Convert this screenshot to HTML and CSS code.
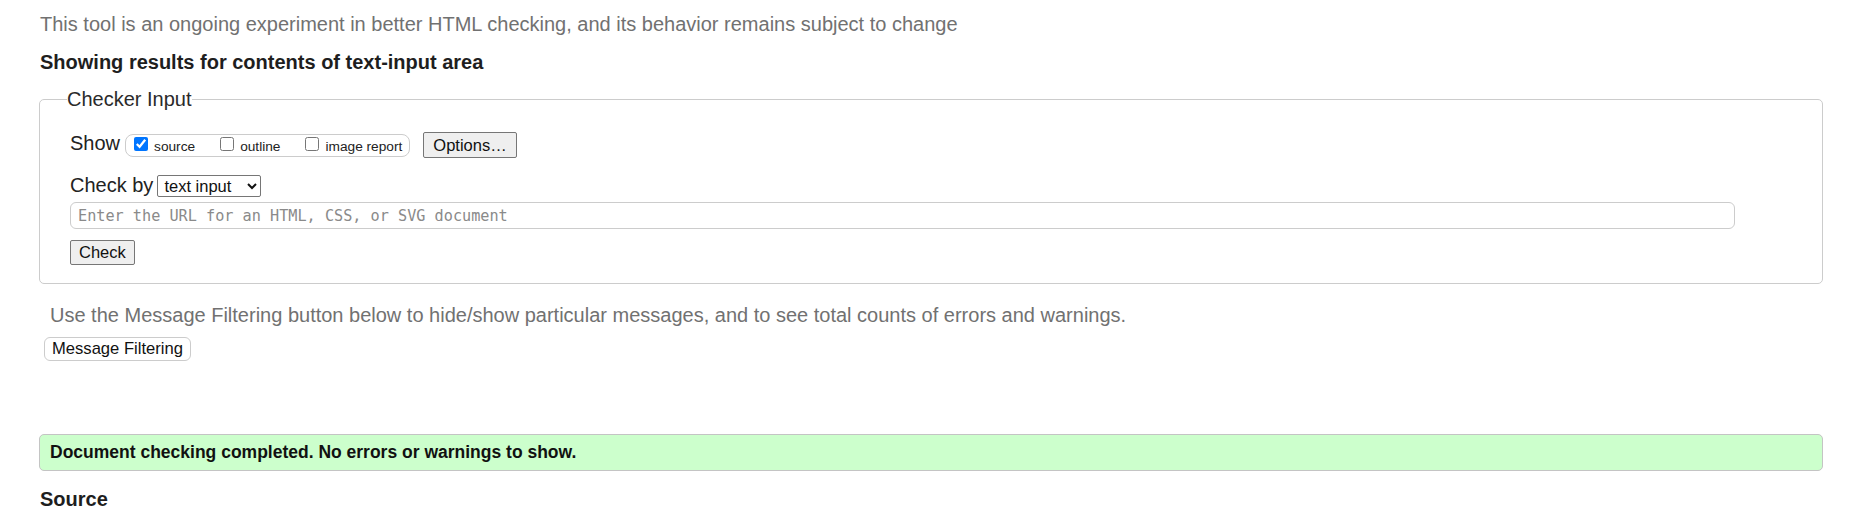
FILE: index.html
```html
<!DOCTYPE html>
<html lang="en">
<head>
<meta charset="utf-8">
<title>Nu Html Checker</title>
<link rel="stylesheet" href="styles.css">
</head>
<body>
<p class="intro">This tool is an ongoing experiment in better HTML checking, and its behavior remains subject to change</p>
<h2 class="results-title">Showing results for contents of text-input area</h2>
<fieldset class="checker">
  <legend class="checker-legend">Checker Input</legend>
  <div class="show-row">
    <span class="row-label show-label">Show</span>
    <div class="show-group">
      <label class="opt"><input type="checkbox" class="cb" checked><span>source</span></label>
      <label class="opt"><input type="checkbox" class="cb"><span>outline</span></label>
      <label class="opt"><input type="checkbox" class="cb"><span>image report</span></label>
    </div>
    <button type="button" class="btn options-btn">Options…</button>
  </div>
  <div class="checkby-row">
    <span class="row-label">Check by</span>
    <select class="doc-select">
      <option>text input</option>
      <option>address</option>
      <option>file upload</option>
    </select>
  </div>
  <input type="text" class="url-input" placeholder="Enter the URL for an HTML, CSS, or SVG document">
  <button type="button" class="btn check-btn">Check</button>
</fieldset>
<p class="filter-note">Use the Message Filtering button below to hide/show particular messages, and to see total counts of errors and warnings.</p>
<button type="button" class="filter-btn">Message Filtering</button>
<div class="success">Document checking completed. No errors or warnings to show.</div>
<h2 class="source-title">Source</h2>
</body>
</html>
```
FILE: styles.css
```css
html, body {
  background: #ffffff;
}
body {
  margin: 0;
  padding: 0 30px 20px 39px;
  font-family: "Liberation Sans", Arial, sans-serif;
  color: #222222;
}
.intro {
  margin: 12px 0 0 1px;
  font-size: 20px;
  line-height: 24px;
  color: #717171;
}
.results-title {
  margin: 15px 0 0 1px;
  font-size: 20px;
  line-height: 22px;
  font-weight: bold;
  color: #1e1e1e;
}
.checker {
  margin: 15px 0 0 0;
  border: 1px solid #cccccc;
  border-radius: 5px;
  padding: 21px 30px 18px 30px;
  min-width: 0;
}
.checker-legend {
  padding: 0;
  margin-left: -3px;
  font-size: 20px;
  line-height: 23px;
  color: #2a2a2a;
}
.show-row {
  display: flex;
  align-items: center;
  height: 26px;
}
.row-label {
  font-size: 20px;
  line-height: 23px;
  color: #222222;
}
.show-label {
  margin-bottom: 4px;
}
.show-group {
  display: flex;
  align-items: center;
  gap: 25px;
  box-sizing: border-box;
  height: 23px;
  margin-left: 5px;
  padding: 0 7px 0 8px;
  border: 1px solid #cccccc;
  border-radius: 8px;
}
.opt {
  display: flex;
  align-items: center;
  gap: 6px;
  font-size: 13.7px;
  color: #222222;
}
.opt span {
  padding-top: 2px;
}
.cb {
  width: 14px;
  height: 14px;
  margin: 0 0 3px 0;
}
.btn {
  font-family: "Liberation Sans", Arial, sans-serif;
  font-size: 16.5px;
  color: #111111;
  background: #efefef;
  border: 1px solid #767676;
  border-radius: 2px;
  padding: 0 9px;
  box-sizing: border-box;
}
.options-btn {
  margin-left: 13px;
  height: 26px;
}
.checkby-row {
  display: flex;
  align-items: baseline;
  margin-top: 16px;
}
.doc-select {
  margin-left: 4px;
  width: 104px;
  height: 22px;
  box-sizing: border-box;
  font-family: "Liberation Sans", Arial, sans-serif;
  font-size: 16.5px;
  color: #111111;
  background: #ffffff;
  border: 1px solid #767676;
  border-radius: 2px;
  padding: 0 0 0 2px;
}
.url-input {
  display: block;
  margin-top: 5px;
  width: calc(100% - 57px);
  height: 27px;
  box-sizing: border-box;
  border: 1px solid #cccccc;
  border-radius: 6px;
  padding: 0 7px;
  font-family: "DejaVu Sans Mono", monospace;
  font-size: 15.2px;
  color: #222222;
  background: #ffffff;
}
.url-input::placeholder {
  color: #8a8a8a;
}
.check-btn {
  display: block;
  margin-top: 11px;
  height: 25px;
  padding: 0 8px;
}
.filter-note {
  margin: 19px 0 0 0;
  padding-left: 11px;
  font-size: 20px;
  line-height: 24px;
  color: #717171;
}
.filter-btn {
  display: block;
  margin: 10px 0 0 5px;
  height: 24px;
  box-sizing: border-box;
  padding: 0 7px;
  font-family: "Liberation Sans", Arial, sans-serif;
  font-size: 16.6px;
  color: #111111;
  background: #ffffff;
  border: 1px solid #cccccc;
  border-radius: 6px;
}
.success {
  margin-top: 73px;
  padding: 6px 10px 7px 10px;
  border: 1px solid #c4c4c4;
  border-radius: 5px;
  background: #ccffcc;
  font-size: 17.5px;
  line-height: 22px;
  font-weight: bold;
  color: #111111;
}
.source-title {
  margin: 17px 0 0 1px;
  font-size: 20px;
  line-height: 22px;
  font-weight: bold;
  color: #1e1e1e;
}
```
